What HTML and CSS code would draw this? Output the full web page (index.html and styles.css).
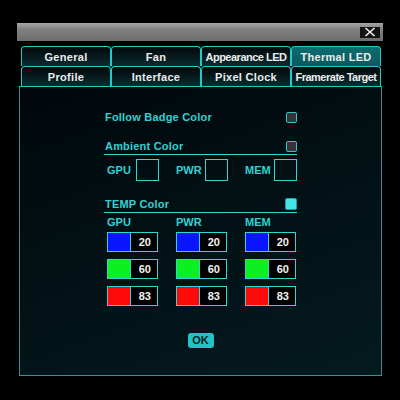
FILE: index.html
```html
<!DOCTYPE html>
<html lang="en">
<head>
    <meta charset="UTF-8">
    <title>Thermal LED</title>
    <link rel="stylesheet" href="styles.css">
</head>
<body>
    <div class="window">
        <div class="titlebar">
            <button class="close" aria-label="Close">
                <svg width="14" height="10" viewBox="0 0 14 10"><path d="M2.5 1 L11.5 9 M11.5 1 L2.5 9" stroke="#f0f0f0" stroke-width="1.6"/></svg>
            </button>
        </div>
        <div class="frame">
            <div class="tabs">
                <div class="tab">General</div>
                <div class="tab">Fan</div>
                <div class="tab tight">Appearance LED</div>
                <div class="tab active">Thermal LED</div>
                <div class="tab">Profile</div>
                <div class="tab">Interface</div>
                <div class="tab">Pixel Clock</div>
                <div class="tab tight">Framerate Target</div>
            </div>

            <div class="panel">
                <div class="content">
                    <div class="option first">
                        <span>Follow Badge Color</span>
                        <span class="check"></span>
                    </div>

                    <div class="option section">
                        <span>Ambient Color</span>
                        <span class="check"></span>
                    </div>
                    <div class="pick-row">
                        <div class="pick"><span class="pick-label">GPU</span><span class="box"></span></div>
                        <div class="pick"><span class="pick-label">PWR</span><span class="box"></span></div>
                        <div class="pick"><span class="pick-label">MEM</span><span class="box"></span></div>
                    </div>

                    <div class="option section temp">
                        <span>TEMP Color</span>
                        <span class="check on"></span>
                    </div>
                    <div class="temp-grid">
                        <div class="col">
                            <div class="col-head">GPU</div>
                            <div class="swatch"><span class="color blue"></span><span class="num">20</span></div>
                            <div class="swatch"><span class="color green"></span><span class="num">60</span></div>
                            <div class="swatch"><span class="color red"></span><span class="num">83</span></div>
                        </div>
                        <div class="col">
                            <div class="col-head">PWR</div>
                            <div class="swatch"><span class="color blue"></span><span class="num">20</span></div>
                            <div class="swatch"><span class="color green"></span><span class="num">60</span></div>
                            <div class="swatch"><span class="color red"></span><span class="num">83</span></div>
                        </div>
                        <div class="col">
                            <div class="col-head">MEM</div>
                            <div class="swatch"><span class="color blue"></span><span class="num">20</span></div>
                            <div class="swatch"><span class="color green"></span><span class="num">60</span></div>
                            <div class="swatch"><span class="color red"></span><span class="num">83</span></div>
                        </div>
                    </div>

                    <div class="actions">
                        <button class="ok">OK</button>
                    </div>
                </div>
            </div>
        </div>
    </div>
</body>
</html>
```

FILE: styles.css
```css
body {
    margin: 0;
    background: #000;
    font-family: "Liberation Sans", Arial, sans-serif;
    font-weight: bold;
}
.window {
    width: 366px;
    height: 354px;
    margin: 23px 0 0 17px;
    background: #000;
}
.titlebar {
    height: 18px;
    background: linear-gradient(#a6a6a6, #808080 35%, #6e6e6e);
    display: flex;
    justify-content: flex-end;
    align-items: center;
    padding-right: 3px;
}
.close {
    width: 20px;
    height: 11px;
    padding: 0;
    border: none;
    background: #141414;
    display: flex;
    align-items: center;
    justify-content: center;
}
.frame {
    padding: 5px 1px 0 2px;
}
.tabs {
    display: grid;
    grid-template-columns: repeat(4, 1fr);
    margin: 0 1px 0 2px;
}
.tab {
    height: 20px;
    box-sizing: border-box;
    border: 1px solid #22c9cf;
    border-bottom: none;
    border-radius: 4px 4px 0 0;
    background: linear-gradient(#02080a, #0b2c31);
    color: #ececec;
    font-size: 11px;
    letter-spacing: 0.3px;
    display: flex;
    align-items: center;
    justify-content: center;
    white-space: nowrap;
    overflow: hidden;
}
.tab.active {
    background: linear-gradient(#0d6c70, #0a5a5e);
}
.tab.tight {
    letter-spacing: -0.5px;
}
.panel {
    height: 290px;
    box-sizing: border-box;
    border: 1px solid #4d8a90;
    border-top-color: #22c9cf;
    background: linear-gradient(160deg, #01070a, #03151a 70%, #041a1f);
}
.content {
    width: 193px;
    margin: 0 auto;
    padding-top: 24px;
    color: #30d2d4;
    font-size: 11px;
}
.option {
    height: 12px;
    display: flex;
    justify-content: space-between;
    align-items: center;
    padding-left: 1px;
    letter-spacing: 0.2px;
}
.section {
    margin-top: 17px;
    padding-bottom: 2px;
    border-bottom: 1px solid #2fd6d8;
}
.check {
    width: 11px;
    height: 11px;
    box-sizing: border-box;
    border: 1px solid #2bc9cc;
    border-radius: 2px;
    background: #3a3238;
}
.check.on {
    width: 12px;
    height: 12px;
    background: #45e4e6;
    border-color: #1e9fa4;
}
.pick-row {
    display: flex;
    margin-top: 4px;
    padding-left: 3px;
}
.pick {
    flex: none;
    width: 69px;
    display: flex;
    align-items: center;
}
.pick-label {
    width: 29px;
}
.box {
    width: 23px;
    height: 22px;
    box-sizing: border-box;
    border: 1px solid #2fd6d8;
}
.temp {
    margin-top: 17px;
}
.temp-grid {
    display: flex;
    padding-left: 3px;
    margin-top: 3px;
}
.col {
    flex: none;
    width: 69px;
}
.col-head {
    height: 13px;
    line-height: 13px;
}
.swatch {
    width: 51px;
    height: 20px;
    box-sizing: border-box;
    border: 1px solid #2fd6d8;
    display: flex;
    margin-top: 7px;
    background: #000;
}
.col-head + .swatch {
    margin-top: 3px;
}
.color {
    width: 22px;
    border-right: 1px solid #2fd6d8;
}
.blue { background: #0a14ff; }
.green { background: #0bf020; }
.red { background: #ff0a0a; }
.num {
    flex: 1;
    color: #f2f2f2;
    text-align: right;
    padding-right: 6px;
    line-height: 18px;
}
.actions {
    display: flex;
    justify-content: center;
    margin-top: 27px;
}
.ok {
    width: 26px;
    height: 15px;
    padding: 0;
    border: none;
    border-radius: 3px;
    background: #22c4c6;
    color: #062224;
    font-family: "Liberation Sans", Arial, sans-serif;
    font-weight: bold;
    font-size: 11px;
    line-height: 15px;
}
```
